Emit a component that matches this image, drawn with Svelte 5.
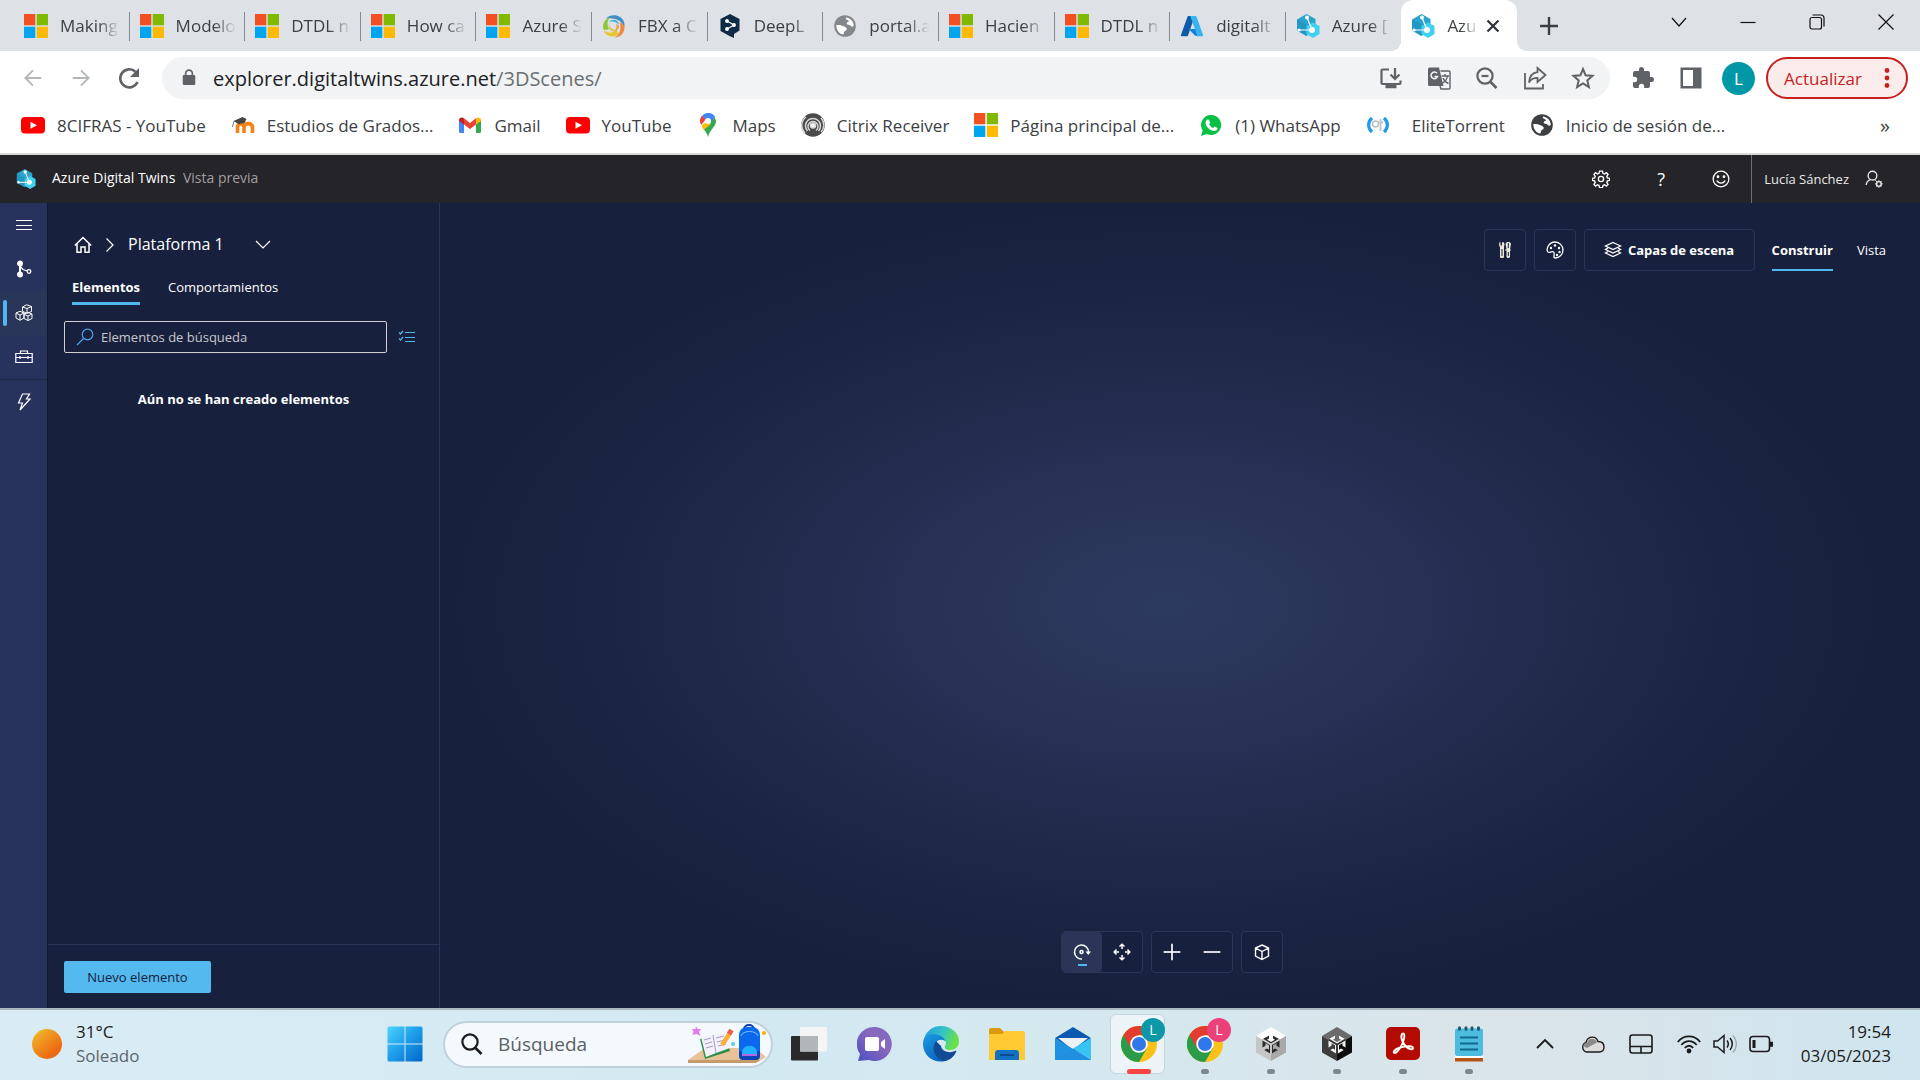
<script>
  const tabs = [
    { icon: 'ms', title: 'Making' },
    { icon: 'ms', title: 'Modelo' },
    { icon: 'ms', title: 'DTDL n' },
    { icon: 'ms', title: 'How ca' },
    { icon: 'ms', title: 'Azure S' },
    { icon: 'swirl', title: 'FBX a C' },
    { icon: 'deepl', title: 'DeepL' },
    { icon: 'globe', title: 'portal.a', faded: true },
    { icon: 'ms', title: 'Hacien' },
    { icon: 'ms', title: 'DTDL n' },
    { icon: 'azure', title: 'digitalt' },
    { icon: 'twins', title: 'Azure [' },
    { icon: 'twins', title: 'Azu', active: true }
  ];
  const bookmarks = [
    { icon: 'youtube', title: '8CIFRAS - YouTube' },
    { icon: 'moodle', title: 'Estudios de Grados...' },
    { icon: 'gmail', title: 'Gmail' },
    { icon: 'youtube', title: 'YouTube' },
    { icon: 'maps', title: 'Maps' },
    { icon: 'citrix', title: 'Citrix Receiver' },
    { icon: 'ms', title: 'Página principal de...' },
    { icon: 'whatsapp', title: '(1) WhatsApp' },
    { icon: 'elite', title: 'EliteTorrent', spaced: true },
    { icon: 'globe', title: 'Inicio de sesión de...' }
  ];
  const omniActions = [
    ['install', 'Instalar'],
    ['translate', 'Traducir'],
    ['zoomout', 'Zoom'],
    ['share', 'Compartir'],
    ['star', 'Añadir a marcadores']
  ];
  const rail = [
    ['menu', 'Menú'],
    ['graph', 'Grafo'],
    ['cubes', 'Escenas 3D'],
    ['toolbox', 'Herramientas'],
    ['bolt', 'Acciones']
  ];
  const apps = [
    { icon: 'taskview', name: 'Vista de tareas' },
    { icon: 'chat', name: 'Chat' },
    { icon: 'edge', name: 'Edge' },
    { icon: 'folder', name: 'Explorador' },
    { icon: 'mail', name: 'Correo' },
    { icon: 'chrome', name: 'Chrome', badge: 'teal', active: true },
    { icon: 'chrome', name: 'Chrome 2', badge: 'pink', running: true },
    { icon: 'unityhub', name: 'Unity Hub', running: true },
    { icon: 'unity', name: 'Unity', running: true },
    { icon: 'acrobat', name: 'Acrobat', running: true },
    { icon: 'notepad', name: 'Bloc de notas', running: true }
  ];
</script>

{#snippet icon(name)}
  {#if name === 'ms'}
    <svg viewBox="0 0 24 24"><path fill="#f25022" d="M0 0h11.3v11.3H0z" /><path fill="#7fba00" d="M12.7 0H24v11.3H12.7z" /><path fill="#00a4ef" d="M0 12.7h11.3V24H0z" /><path fill="#ffb900" d="M12.7 12.7H24V24H12.7z" /></svg>
  {:else if name === 'swirl'}
    <svg viewBox="0 0 24 24"><path fill="#3f8fc4" d="M4 4.500C9-.5 19 0 22 8c.7 2 .6 4 0 5.500C21 8 15 3 4 4.500z" /><path fill="#f08a3c" d="M22.500 13c0 6-4 10.500-10 10.500C17 21 20 16 17.500 8c2.500 1 4.500 3 5 5z" /><path fill="#e9c62c" d="M17 19.500C12 24.500 4 23 1.500 16c3 3 9 4 13.500-.5-.2 2 .5 3 2 4z" /><path fill="#8cc540" d="M1.500 15.500C0 10 2.500 5 8 3.500 5.500 6.500 4.500 10 7 15c-2 1-4 1-5.500.5z" /><path fill="#4fb2cf" d="M7 8c3-4 10-2.500 10 3-3-3.500-7-4-10-3z" /><path fill="#f3a14f" d="M17 11.500c0 3.500-2 6-5.500 6 2.500-1.500 3.500-4 2.500-7.500z" /><path fill="#c8d43a" d="M11.500 17.500C8 17 6 14 7 9.500c.5 3.500 2.500 6 6 6z" /></svg>
  {:else if name === 'deepl'}
    <svg viewBox="0 0 24 24"><path fill="#0f2b46" d="M12 0l9.500 5v11.500L16 20v4l-5-2.300L2.500 17V5z" /><g stroke="#fff" stroke-width="1.200" fill="#fff"><path fill="none" d="M9 7l7 4-7 4" /><circle cx="9" cy="7" r="1.300" /><circle cx="16" cy="11" r="1.300" /><circle cx="9" cy="15" r="1.300" /></g></svg>
  {:else if name === 'globe'}
    <svg viewBox="0 0 24 24"><circle cx="12" cy="12" r="10.800" fill="currentColor" /><path fill="#fff" d="M13 3.500c4.500.5 7.500 4 7.800 8-1 1.800-2.300 1.500-3 .5-.8-1.200-2-1-3.300-1.500-1.300-.6-1-2.200.5-2.500 1.300-.2 1.200-1.500 0-1.800-1.500-.4-2.800-1-2-2.700zM3.300 11c2.200-.3 5 .2 7.200 1.200 1.800.8 3.500 1.500 3.200 3-.2 1.500-2.200 1.300-2.700 3-.2 1-.3 2-1 2.300C6 19.700 3.300 16 3.300 11z" /></svg>
  {:else if name === 'azure'}
    <svg viewBox="0 0 24 24"><path fill="#0f59a8" d="M8.500 2h6.300L8 21.500a1 1 0 0 1-1 .7H2a1 1 0 0 1-1-1.400L7.500 2.700a1 1 0 0 1 1-.7z" /><path fill="#1b7fd6" d="M17.500 15H8.800l6 6.500 3 .7z" /><path fill="#36b4f0" d="M9.500 2h6a1 1 0 0 1 1 .7l6.500 18.100a1 1 0 0 1-1 1.400h-6a1 1 0 0 0 1-1.400L10.500 2.700a1 1 0 0 0-1-.7z" /></svg>
  {:else if name === 'twins'}
    <svg viewBox="0 0 24 24"><path fill="#2ba3cf" d="M10.500 0l9 5v11l-9 6-9.500-5.500V5.500z" /><path fill="#1b89b5" d="M1 16.500V5.500L10 10l.5 12z" opacity=".5" /><path fill="#3fd0f2" d="M17 8.500l6.500 3.500v8L17 24l-6.500-4v-8z" /><g stroke="#fff" stroke-width="1.200"><path d="M11 3.500L16 16M3 16h13" /></g><circle cx="11" cy="3.500" r="2" fill="#fff" /><circle cx="3" cy="16" r="1.600" fill="#fff" /><circle cx="16" cy="16" r="3" fill="#fff" /></svg>
  {:else if name === 'youtube'}
    <svg viewBox="0 0 24 24"><rect x="0" y="4" width="24" height="16.500" rx="4" fill="#f00" /><path fill="#fff" d="M9.500 8.700l6.500 3.500-6.500 3.600z" /></svg>
  {:else if name === 'moodle'}
    <svg viewBox="0 0 24 24" fill="none"><path stroke="#f98012" stroke-width="3.600" d="M6.500 20v-6c0-4.500 6.500-4.500 6.500 0v6m0-6c0-4.500 8.500-4.500 8.500 0v6" /><path fill="#444" d="M2.500 8l9-4 4 2-2 4-6 1z" /><path stroke="#777" d="M3 8l-1.500 6" /></svg>
  {:else if name === 'gmail'}
    <svg viewBox="0 0 24 24"><path fill="#4285f4" d="M1 7v11.500A1.500 1.500 0 0 0 2.500 20H6v-9z" /><path fill="#34a853" d="M23 7v11.500a1.500 1.500 0 0 1-1.500 1.500H18v-9z" /><path fill="#ea4335" d="M6 11.500V5.300l6 4.700 6-4.700v6.200L12 16z" /><path fill="#c5221f" d="M1 7c0-2.700 3-3.200 5-1.700v6.200L1 8z" /><path fill="#fbbc04" d="M23 7c0-2.700-3-3.200-5-1.700v6.200L23 8z" /></svg>
  {:else if name === 'maps'}
    <svg viewBox="0 0 24 24"><path fill="#34a853" d="M20 8c0 6-6 8-8 16-1-4-3-6-5-9L18.500 4z" /><path fill="#fbbc04" d="M5.500 12.500L12 8l3 3-7.500 6z" /><path fill="#ea4335" d="M4 8c0-2 .7-3.800 2-5.200L10 6l-4.800 6C4.400 10.800 4 9.500 4 8z" /><path fill="#4285f4" d="M6 2.800C9-.8 16.500-1.500 19 4l-6 6-4-4z" /><circle cx="12" cy="8" r="3" fill="#fff" /></svg>
  {:else if name === 'citrix'}
    <svg viewBox="0 0 24 24" fill="none"><circle cx="12" cy="12" r="11.800" fill="#4a4a4a" /><g stroke="#d8d8d8" stroke-width="1.500"><circle cx="12" cy="12.500" r="2.500" fill="#fff" /><path d="M6.500 18a7.500 7.500 0 1 1 11 0M4 20a10.500 10.500 0 0 1 1-16M9 17.500a5 5 0 1 1 6 0M20 5a10 10 0 0 1 0 14" /></g></svg>
  {:else if name === 'whatsapp'}
    <svg viewBox="0 0 24 24"><path fill="#08c044" d="M12.300 2a10 10 0 1 1-4.500 19L2 23l1.700-5.500A10 10 0 0 1 12.300 2z" /><path fill="#fff" d="M8.500 6.500l1.500.2 1.200 3-1 1.500c1 2 2 3 4 3.900l1.300-1.500 3 1.500c0 2-1.800 3-3.500 2.900-4.500-.6-8-4.500-8.500-8 0-1.500.8-3 2-3.500z" /></svg>
  {:else if name === 'elite'}
    <svg viewBox="0 0 24 24" fill="none"><g stroke="#1e9bf0" stroke-width="3.200"><path d="M6 5C1.500 9 1.500 15 6 19M18 5c4.500 4 4.500 10 0 14" /></g><circle cx="9.500" cy="11" r="3" stroke="#b9bec4" stroke-width="1.500" /><path stroke="#c4c8cc" stroke-width="2" d="M14.500 6v12M12 9.500h5" /></svg>
  {:else if name === 'back' || name === 'forward'}
    <svg viewBox="0 0 24 24" fill="none" stroke="currentColor" stroke-width="2.200">{#if name === 'back'}<path d="M22 12H3.500M12 2.800L2.800 12l9.200 9.200" />{:else}<path d="M2 12h18.500M12 2.800l9.200 9.200-9.200 9.200" />{/if}</svg>
  {:else if name === 'reload'}
    <svg viewBox="0 0 24 24" fill="none" stroke="currentColor" stroke-width="2.600"><path d="M20.500 16A9 9 0 1 1 18.500 5.800" /><path fill="currentColor" stroke="none" d="M22 2v9h-9z" /></svg>
  {:else if name === 'lock'}
    <svg viewBox="0 0 24 24"><rect x="4.500" y="8.500" width="15" height="12" rx="1.500" fill="currentColor" /><path d="M8 9.500V6.500a4 4 0 0 1 8 0v3" fill="none" stroke="currentColor" stroke-width="2" /></svg>
  {:else if name === 'install'}
    <svg viewBox="0 0 24 24" fill="none" stroke="currentColor" stroke-width="2.200"><path d="M10 3.500H3.500a1 1 0 0 0-1 1V17a1 1 0 0 0 1 1h17a1 1 0 0 0 1-1v-2.500M16 2v10.500M11.500 8.500l4.500 4.500 4.500-4.500" /><path stroke-width="3.500" d="M6.500 20.500h11" /></svg>
  {:else if name === 'translate'}
    <svg viewBox="0 0 24 24" fill="none"><path fill="#5f6368" d="M2.500 1.500H12L16.500 20H2.500A1.500 1.500 0 0 1 1 18.500V3a1.500 1.500 0 0 1 1.500-1.500z" /><path stroke="#f1f3f4" stroke-width="1.600" d="M10 7.300A3.300 3.300 0 1 0 10.500 10.500H7.500" /><path stroke="#5f6368" stroke-width="1.400" d="M13.500 5H22a1 1 0 0 1 1 1v16a1 1 0 0 1-1 1h-8l-1-3M14.500 10H22M18 8v2M20.500 10c-.5 3-3 6-5 7M16 12c1 2.500 3 4.500 5.500 5.500" /></svg>
  {:else if name === 'zoomout' || name === 'search'}
    <svg viewBox="0 0 24 24" fill="none" stroke="currentColor" stroke-width="2.200"><circle cx="10" cy="10" r="7.600" /><path stroke-width="2.600" d="M15.500 16l6 6" />{#if name === 'zoomout'}<path d="M6.500 10h7" />{/if}</svg>
  {:else if name === 'share'}
    <svg viewBox="0 0 24 24" fill="none" stroke="currentColor" stroke-width="1.800"><path d="M2 7v15.500h18V18" /><path d="M14.500 2l8 7-8 7v-4.200c-4.500 0-7 1.700-8.500 4.700.5-6 3.500-9.700 8.500-10.300z" /></svg>
  {:else if name === 'star'}
    <svg viewBox="0 0 24 24" fill="none" stroke="currentColor" stroke-width="2"><path d="M12 3l2.600 6.300 6.900.6-5.200 4.500 1.600 6.700L12 17.500l-5.900 3.600 1.600-6.700-5.200-4.500 6.900-.6z" /></svg>
  {:else if name === 'puzzle'}
    <svg viewBox="0 0 24 24"><path fill="currentColor" d="M20.500 11H19V7a2 2 0 0 0-2-2h-4V3.500a2.500 2.500 0 0 0-5 0V5H4a2 2 0 0 0-2 2v3.800h1.500a2.700 2.700 0 0 1 0 5.400H2V20a2 2 0 0 0 2 2h3.800v-1.500a2.700 2.700 0 0 1 5.400 0V22H17a2 2 0 0 0 2-2v-4h1.500a2.500 2.500 0 0 0 0-5z" /></svg>
  {:else if name === 'panel'}
    <svg viewBox="0 0 24 24"><path fill="currentColor" fill-rule="evenodd" d="M1.500 1.500h21v21h-21zM4 4v16h10V4z" /></svg>
  {:else if name === 'plus' || name === 'minus'}
    <svg viewBox="0 0 24 24" fill="none" stroke="currentColor" stroke-width="2"><path d="M2 12h20" />{#if name === 'plus'}<path d="M12 2v20" />{/if}</svg>
  {:else if name === 'gear'}
    <svg viewBox="0 0 24 24" fill="none" stroke="currentColor" stroke-width="1.800"><path d="M10 1.500h4l.6 3 2 .8 2.600-1.700 2.200 2.200-1.700 2.600.8 2 3 .6v3l-3 .6-.8 2 1.700 2.600-2.200 2.200-2.600-1.700-2 .8-.6 3h-4l-.6-3-2-.8-2.600 1.700-2.200-2.200 1.700-2.600-.8-2-3-.6v-3l3-.6.8-2-1.700-2.600 2.200-2.200 2.600 1.700 2-.8z" /><circle cx="12" cy="12" r="3.500" /></svg>
  {:else if name === 'smile'}
    <svg viewBox="0 0 24 24" fill="none" stroke="currentColor" stroke-width="1.700"><circle cx="12" cy="12" r="10.500" /><path d="M6.500 14c2 4.500 9 4.500 11 0" /><circle cx="8" cy="9" r="1" fill="currentColor" /><circle cx="16" cy="9" r="1" fill="currentColor" /></svg>
  {:else if name === 'user'}
    <svg viewBox="0 0 24 24" fill="none" stroke="currentColor" stroke-width="1.800"><circle cx="10" cy="7.500" r="5.800" /><path d="M1.500 20c.5-4 3-6.500 6.500-7.500M13 13l1.500 1" /><circle cx="18.500" cy="18.500" r="3" /><path stroke-width="1.500" d="M18.500 13.500v2M18.500 21.500v2M13.500 18.500h2M21.500 18.500h2M15 15l1.400 1.400M20.600 20.600L22 22M22 15l-1.400 1.400M16.400 20.600L15 22" /></svg>
  {:else if name === 'menu'}
    <svg viewBox="0 0 18 18" stroke="currentColor"><path d="M1 4.500h16M1 9.500h16M1 13.500h16" /></svg>
  {:else if name === 'graph'}
    <svg viewBox="0 0 18 18" fill="none" stroke="currentColor" stroke-width="1.300"><circle cx="5" cy="3.500" r="2.300" fill="currentColor" /><circle cx="5" cy="14.500" r="2.300" fill="currentColor" /><circle cx="14" cy="11.500" r="1.800" /><path stroke-width="2" d="M5 4v10" /><path d="M5 6l3 3.500 4 1.500" /></svg>
  {:else if name === 'cubes'}
    <svg viewBox="0 0 18 18" fill="none" stroke="currentColor"><path d="M11.500.8l5 1.700v5l-4.500 1.800-4.500-2V3zM7.500 3l4.500 1.500 4.500-2M12 4.500v4" /><path d="M5 7.300l4 1.700v5l-4 2.300-4-2.300V9zM1 9l4 2 4-2M5 11v5" /><path d="M13 8.500l4 1.500v4.500l-4 2-4-2V10zM9.500 10.500l3.500 1.500 4-2M13 12v4.500" /></svg>
  {:else if name === 'toolbox'}
    <svg viewBox="0 0 18 18" fill="none" stroke="currentColor" stroke-width="1.200"><path d="M.8 5.500h16.400v9H.8zM5.500 5V3h7v2M.8 9.500h16.400M5 8v3M13 8v3" /></svg>
  {:else if name === 'bolt'}
    <svg viewBox="0 0 18 18" fill="none" stroke="currentColor" stroke-width="1.200"><path d="M7.500 1h7L11.500 6H15L5 17l2.500-7H3.500z" /></svg>
  {:else if name === 'home'}
    <svg viewBox="0 0 18 18" fill="none" stroke="currentColor" stroke-width="1.500"><path d="M.8 10.500L9 2.500l8.200 8M3 9v8.200h4V12h4v5.200h4V9" /></svg>
  {:else if name === 'chevright'}
    <svg viewBox="0 0 18 18" fill="none" stroke="currentColor" stroke-width="1.200"><path d="M6.500 3.500L13 10l-6.500 6.500" /></svg>
  {:else if name === 'chevdown'}
    <svg viewBox="0 0 18 18" fill="none" stroke="currentColor" stroke-width="1.200"><path d="M2 6l7 7 7-7" /></svg>
  {:else if name === 'find'}
    <svg viewBox="0 0 18 18" fill="none" stroke="currentColor" stroke-width="1.200"><circle cx="11.500" cy="6.500" r="5.300" /><path d="M7.500 10.500L1 17" /></svg>
  {:else if name === 'checklist'}
    <svg viewBox="0 0 18 18" fill="none" stroke="currentColor" stroke-width="1.200"><path d="M7 4.500h10M7 9.500h10M7 13.500h10M1 4.500l1.500 1.500L5 3M1 10.500l1.500 1.500L5 9" /></svg>
  {:else if name === 'tools'}
    <svg viewBox="0 0 18 18"><path fill="#e9e6dc" d="M3.500 1l1 .5v3h1.500v-3L7.500 1l1 2-.5 3.500v10L6.500 17H5l-1-.5v-10L3 4z" /><path fill="#e9e6dc" d="M9.500 2.500L11 1h2.500L15 2.500 14 8.500h1v1h-1V16l-1 1h-1.500l-1-1V9.500H9v-1h1.500z" /><path stroke="#17203c" d="M6 8v7M12.300 2v5M12.300 11v4" /></svg>
  {:else if name === 'palette'}
    <svg viewBox="0 0 18 18" fill="none" stroke="currentColor" stroke-width="1.300"><path d="M9 1a8 8 0 1 1 0 16c-2.500 0 .5-4.500-1.500-6S3 13 1.500 10.500C0 7 3.500 1 9 1z" /><g fill="currentColor" stroke="none"><circle cx="5" cy="7" r="1.200" /><circle cx="9" cy="4.500" r="1.200" /><circle cx="13" cy="7" r="1.200" /><circle cx="13.500" cy="11" r="1.200" /><circle cx="11" cy="14" r="1.200" /></g></svg>
  {:else if name === 'layers'}
    <svg viewBox="0 0 18 18" fill="none" stroke="currentColor" stroke-width="1.300"><path d="M9 1.500l7.500 3.500L9 8.500 1.500 5zM4 7L1.500 8.500 9 12l7.500-3.500L14 7M4 10.500L1.500 12 9 15.500l7.500-3.500-2.500-1.500" /></svg>
  {:else if name === 'orbit'}
    <svg viewBox="0 0 18 18" fill="none" stroke="currentColor" stroke-width="1.500"><path d="M9 16A7 7 0 1 1 15.500 9" /><circle cx="8.500" cy="9" r="1.500" /><path fill="currentColor" stroke="none" d="M12.500 8.500H18l-2.700 3.500z" /></svg>
  {:else if name === 'pan'}
    <svg viewBox="0 0 18 18" fill="none" stroke="currentColor" stroke-width="1.500"><path d="M9 1.500V6M9 12v4.500M1.500 9H6M12 9h4.500M6.500 3.500L9 1.200l2.500 2.300M6.500 14.500L9 16.800l2.500-2.300M3.500 6.500L1.200 9l2.300 2.500M14.500 6.500L16.800 9l-2.300 2.500" /></svg>
  {:else if name === 'cube'}
    <svg viewBox="0 0 18 18" fill="none" stroke="currentColor" stroke-width="1.400"><path d="M9 2l6.500 3v8L9 16.500 2.500 13V5zM2.500 5L9 8.500 15.500 5M9 8.500v8" /></svg>
  {:else if name === 'windows'}
    <svg viewBox="0 0 36 36"><defs><linearGradient id="win" x1="0" y1="0" x2="1" y2="1"><stop stop-color="#4cd4ff" /><stop offset=".5" stop-color="#1d9be9" /><stop offset="1" stop-color="#0067c8" /></linearGradient></defs><path fill="url(#win)" d="M2 .5h15.500v17H.5V2A1.500 1.500 0 0 1 2 .5zM18.500.5H34A1.500 1.500 0 0 1 35.500 2v15.500h-17zM.5 18.500h17v17H2A1.500 1.500 0 0 1 .5 34zM18.500 18.500h17V34a1.500 1.500 0 0 1-1.500 1.500H18.500z" /></svg>
  {:else if name === 'taskview'}
    <svg viewBox="0 0 36 36"><rect y="10" width="27" height="24.500" rx="1" fill="#2a2a2a" /><rect x="9" y="1" width="27" height="24.500" rx="1" fill="#f5f5f5" /><path fill="#b3b6b8" d="M9 10h18v15.500H9z" /></svg>
  {:else if name === 'chat'}
    <svg viewBox="0 0 36 36"><defs><linearGradient id="cht" x1="1" y1="0" x2="0" y2="1"><stop stop-color="#7a6cc4" /><stop offset=".4" stop-color="#8a68ba" /><stop offset="1" stop-color="#4b50c4" /></linearGradient></defs><path fill="url(#cht)" d="M18 1a17 17 0 1 1-6 33L1 35l2-7A17 17 0 0 1 18 1z" /><rect x="8" y="11" width="14" height="14" rx="2" fill="#fff" /><path fill="#fff" d="M24 16l4-3v10l-4-3z" /></svg>
  {:else if name === 'edge'}
    <svg viewBox="0 0 36 36"><defs><linearGradient id="ed1" x1="0" y1="0" x2="1" y2=".3"><stop offset=".2" stop-color="#2aa5dc" /><stop offset=".6" stop-color="#35c6c0" /><stop offset="1" stop-color="#6be048" /></linearGradient><linearGradient id="ed2" x1="0" y1="0" x2=".6" y2="1"><stop stop-color="#1b9de2" /><stop offset="1" stop-color="#0a63c0" /></linearGradient></defs><path fill="url(#ed1)" d="M.5 15C2 6 9 0 18 0c10 0 18 7 18 15 0 6-4 9-9 9-4 0-6-2-5-4 2-2 1-7-4-7z" /><path fill="url(#ed2)" d="M0 18C0 11 5 8 10 8c7 0 12 4 12 7-5-3-10 0-10 6s5 12 13 13c-12 5-25-3-25-16z" /><path fill="#114a94" d="M13 15c-5 8-2 16 7 20 6 0 11-4 13-9 1-1-.3-1.500-1-1-5 2.500-13 1-14-5z" /></svg>
  {:else if name === 'folder'}
    <svg viewBox="0 0 36 36"><path fill="#dd9a08" d="M0 4a2 2 0 0 1 2-2h9l4 4v4H0z" /><path fill="#ffc933" d="M0 8h13l3-3h18a2 2 0 0 1 2 2v27H0z" /><path fill="#1271c4" d="M6 34V27a3 3 0 0 1 3-3h18a3 3 0 0 1 3 3v7z" /><path stroke="#0a4c92" stroke-width="2" d="M11 29h14" /></svg>
  {:else if name === 'mail'}
    <svg viewBox="0 0 36 36"><path fill="#0b5ab0" d="M0 12L18 1l18 11-18 13z" /><path fill="#eef1f4" d="M3 12h30L18 24z" /><path fill="#1f93e0" d="M0 12l18 11 18 11H0z" /><path fill="#37c4f2" d="M36 12L18 22.500 36 34z" /><path fill="#218ee0" d="M0 34l18-11.500L36 34z" /></svg>
  {:else if name === 'chrome'}
    <svg viewBox="0 0 36 36"><circle cx="18" cy="18" r="18" fill="#fbc116" /><path fill="#2a9b48" d="M2.400 9A18 18 0 0 0 18 36l7.800-13.500-7.800-4.500z" /><path fill="#e33b2e" d="M2.400 9A18 18 0 0 1 33.600 9H18l-7.800 13.500z" /><circle cx="18" cy="18" r="8.800" fill="#fff" /><circle cx="18" cy="18" r="7" fill="#2f77ea" /></svg>
  {:else if name === 'unityhub' || name === 'unity'}
    {@const hub = name === 'unityhub'}
    <svg viewBox="0 0 36 36"><path fill={hub ? '#fdfdfd' : '#6b6b6b'} d="M18 1l15 9-15 8.500L3 10z" /><path fill={hub ? '#c6c6c6' : '#3d3d3d'} d="M3 10l15 8.500V35L3 26.500z" /><path fill={hub ? '#a9a9a9' : '#0d0d0d'} d="M33 10l-15 8.500V35l15-8.500z" />
      <path fill={hub ? '#2b2b2b' : '#f2f2f2'} d="M18 8.500l8.500 4.800v9.800L18 28l-8.500-4.900v-9.800z" />
      <path fill="none" stroke={hub ? '#d8d8d8' : '#2c2c2c'} stroke-width="1.800" d="M18 28v-9.500l-8.500-5M18 18.500l8.500-5" />
      <path fill={hub ? '#fdfdfd' : '#6b6b6b'} d="M18 7.500l2 1.200v3.800l2 1.200-4 2.300-4-2.300 2-1.200V8.700z" />
      <path fill={hub ? '#c6c6c6' : '#3d3d3d'} d="M9 24.300v-2.500l3.500-2v-2.500l3.500 2v4.500l-2-1.200-3.500 2z" /><path fill={hub ? '#a9a9a9' : '#0d0d0d'} d="M27 24.300v-2.500l-3.500-2v-2.500l-3.500 2v4.500l2-1.200 3.500 2z" /></svg>
  {:else if name === 'acrobat'}
    <svg viewBox="0 0 36 36"><rect x="1" y="1" width="34" height="33" rx="5" fill="#b30b00" /><path fill="none" stroke="#fff" stroke-width="1.900" d="M17 8c3-2 3 3 1 8-2 5-5 10-8 11-3 0-1-4 7-6 6-1.500 11-1 11 1s-4 1.500-7-1.500c-3-3-6-9-4-12.500z" /></svg>
  {:else if name === 'notepad'}
    <svg viewBox="0 0 36 36"><path fill="#b5551a" d="M4 31h28v4.500H4z" /><path fill="#fff" d="M4 29h28v3H4z" /><rect x="4" y="2.500" width="28" height="27.500" rx="2" fill="#4dbbdd" /><path stroke="#0e6a8c" stroke-width="2" d="M9 11.500h18M9 17.500h18M9 23.500h18" /><path stroke="#1f5a75" stroke-width="3" stroke-linecap="round" d="M8.500 1.800v1.500M15 1.800v1.500M21 1.800v1.500M27.500 1.800v1.500" /></svg>
  {/if}
{/snippet}

<div class="screen">
  <header class="chrome">
    <div class="strip">
      <nav class="tabs" aria-label="Pestañas">
        {#each tabs as tab}
          <div class="tab" class:active={tab.active}>
            <button class="tab-main" class:faded={tab.faded}>
              <span class="ico i24">{@render icon(tab.icon)}</span>
              <span class="tab-title">{tab.title}</span>
            </button>
            {#if tab.active}
              <button class="tab-close" aria-label="Cerrar pestaña">
                <svg viewBox="0 0 14 14" stroke="currentColor" stroke-width="2.200"><path d="M1.500 1.500l11 11M12.500 1.500l-11 11" /></svg>
              </button>
            {/if}
          </div>
        {/each}
      </nav>
      <div class="window">
        <button class="newtab" aria-label="Nueva pestaña"><svg viewBox="0 0 18 18" stroke="currentColor" stroke-width="2.400"><path d="M9 0v18M0 9h18" /></svg></button>
        <button aria-label="Buscar pestañas"><svg viewBox="0 0 16 16" fill="none" stroke="currentColor" stroke-width="1.200"><path d="M1 4l7 8 7-8" /></svg></button>
        <button aria-label="Minimizar"><svg viewBox="0 0 16 16" fill="none" stroke="currentColor" stroke-width="1.200"><path d="M.5 8.500h15" /></svg></button>
        <button aria-label="Restaurar"><svg viewBox="0 0 16 16" fill="none" stroke="currentColor" stroke-width="1.200"><rect x="1" y="3.500" width="11.500" height="11.500" rx="2" /><path d="M3.500 1h8.500a3 3 0 0 1 3 3v8.500" /></svg></button>
        <button aria-label="Cerrar"><svg viewBox="0 0 16 16" fill="none" stroke="currentColor" stroke-width="1.200"><path d="M.5.5l15 15M15.500.5l-15 15" /></svg></button>
      </div>
    </div>

    <div class="toolbar">
      <div class="history">
        <button class="dim" aria-label="Atrás"><span class="ico i20">{@render icon('back')}</span></button>
        <button class="dim" aria-label="Adelante"><span class="ico i20">{@render icon('forward')}</span></button>
        <button aria-label="Recargar"><span class="ico i24">{@render icon('reload')}</span></button>
      </div>
      <div class="omnibox">
        <span class="ico i20">{@render icon('lock')}</span>
        <a class="url" href="#url">explorer.digitaltwins.azure.net<span>/3DScenes/</span></a>
        {#each omniActions as [name, label]}
          <button aria-label={label}><span class="ico i24">{@render icon(name)}</span></button>
        {/each}
      </div>
      <div class="extras">
        <button aria-label="Extensiones"><span class="ico i24">{@render icon('puzzle')}</span></button>
        <button aria-label="Panel lateral"><span class="ico i24">{@render icon('panel')}</span></button>
        <button class="avatar">L</button>
        <button class="update">Actualizar <svg viewBox="0 0 6 20" fill="currentColor"><circle cx="3" cy="2.500" r="2.400" /><circle cx="3" cy="10" r="2.400" /><circle cx="3" cy="17.500" r="2.400" /></svg></button>
      </div>
    </div>

    <nav class="bookmarks" aria-label="Marcadores">
      {#each bookmarks as mark}
        <a class:spaced={mark.spaced} href="#marcador"><span class="ico i24">{@render icon(mark.icon)}</span>{mark.title}</a>
      {/each}
      <button class="more">»</button>
    </nav>
  </header>

  <div class="app">
    <header class="appbar">
      <span class="ico i20">{@render icon('twins')}</span>
      <h1>Azure Digital Twins <small>Vista previa</small></h1>
      <div class="appactions">
        <button aria-label="Configuración"><span class="ico i18">{@render icon('gear')}</span></button>
        <button class="help">?</button>
        <button aria-label="Comentarios"><span class="ico i18">{@render icon('smile')}</span></button>
      </div>
      <button class="account">Lucía Sánchez <span class="ico i18">{@render icon('user')}</span></button>
    </header>

    <div class="body">
      <nav class="rail" aria-label="Secciones">
        {#each rail as [name, label]}
          <button class:selected={name === 'cubes'} class:ruled={name === 'bolt'} aria-label={label}><span class="ico i18">{@render icon(name)}</span></button>
        {/each}
      </nav>

      <aside class="panel">
        <div class="crumbs">
          <button aria-label="Inicio"><span class="ico i18">{@render icon('home')}</span></button>
          <span class="ico i18">{@render icon('chevright')}</span>
          <button class="scene-name">Plataforma 1 <span class="ico i18">{@render icon('chevdown')}</span></button>
        </div>
        <div class="pivot">
          <button class="on">Elementos</button>
          <button>Comportamientos</button>
        </div>
        <div class="searchrow">
          <label class="searchbox"><span class="ico i18">{@render icon('find')}</span><input type="text" aria-label="Elementos de búsqueda" placeholder="Elementos de búsqueda" /></label>
          <button aria-label="Selección múltiple"><span class="ico i18">{@render icon('checklist')}</span></button>
        </div>
        <p class="empty">Aún no se han creado elementos</p>
        <footer><button class="primary">Nuevo elemento</button></footer>
      </aside>

      <main class="scene">
        <div class="scenebar">
          <button class="box" aria-label="Herramientas"><span class="ico i18">{@render icon('tools')}</span></button>
          <button class="box" aria-label="Tema"><span class="ico i18">{@render icon('palette')}</span></button>
          <button class="box wide"><span class="ico i18">{@render icon('layers')}</span>Capas de escena</button>
          <div class="modes">
            <button class="on">Construir</button>
            <button>Vista</button>
          </div>
        </div>
        <div class="camera">
          <div class="group">
            <button class="current" aria-label="Orbitar"><span class="ico i18">{@render icon('orbit')}</span></button>
            <button aria-label="Desplazar"><span class="ico i18">{@render icon('pan')}</span></button>
          </div>
          <div class="group">
            <button aria-label="Acercar"><span class="ico i20">{@render icon('plus')}</span></button>
            <button aria-label="Alejar"><span class="ico i20">{@render icon('minus')}</span></button>
          </div>
          <div class="group">
            <button aria-label="Restablecer cámara"><span class="ico i18">{@render icon('cube')}</span></button>
          </div>
        </div>
      </main>
    </div>
  </div>

  <footer class="taskbar">
    <button class="weather">
      <span class="sun"></span>
      <span class="lines"><span>31°C</span><span class="soft">Soleado</span></span>
    </button>
    <div class="dock">
      <button class="start" aria-label="Inicio"><span class="ico i36">{@render icon('windows')}</span></button>
      <label class="wsearch">
        <span class="ico i24">{@render icon('search')}</span>
        <input type="text" aria-label="Búsqueda" placeholder="Búsqueda" />
        <svg class="school" viewBox="0 0 78 40">
          <path fill="#e8c298" d="M0 36l17-12h50l11 9-8 5H0z" /><path fill="#c59a6c" d="M0 36h72l-4 3H0z" />
          <path fill="#2f8f4a" d="M12 15l25-6 5 18-25 8z" /><path fill="#f4f1fb" d="M13 13l12-2 3 18-10 4zM25 11l13-3 4 16-14 5z" />
          <path stroke="#a39cc0" fill="none" d="M25 11l3 18M16 16l7-2M17 20l7-2M18 24l7-2M28 14l8-2M29 18l8-2M30 22l8-2" />
          <path stroke="#fbb034" stroke-width="4.500" d="M34 21l8-12" /><path stroke="#ef5b4c" stroke-width="5" d="M41 10l2.500-4" />
          <path fill="#e07bf0" d="M8 2l1.500 3 3.500 0-2 3 1.500 4-4-2-4 1 1-3.500L4 5l3.500 0z" />
          <path fill="none" stroke="#0a3fa8" stroke-width="2" d="M56 5a5 4 0 0 1 10 0" /><rect x="51" y="3" width="21" height="33" rx="8" fill="#0a68ee" /><path fill="#0a45b8" d="M51 27h21v5a4 4 0 0 1-4 4H55a4 4 0 0 1-4-4z" /><path fill="#21b0ff" d="M54 27a8 8 0 0 1 15 0v3H54z" /><path stroke="#c86bea" stroke-width="1.800" d="M54 31h15" /><path stroke="#6ec9ff" fill="none" d="M53 12c1-6 16-6 17 0" />
          <circle cx="45" cy="20" r="2" fill="#58cfe0" /><circle cx="76" cy="9" r="2" fill="#ffb000" />
        </svg>
      </label>
      {#each apps as app}
        <button class="app-button" class:active={app.active} class:running={app.running} aria-label={app.name}>
          <span class="ico i36">{@render icon(app.icon)}</span>
          {#if app.badge}<span class="badge {app.badge}">L</span>{/if}
        </button>
      {/each}
    </div>
    <div class="tray">
      <button aria-label="Mostrar iconos ocultos"><svg class="t24" viewBox="0 0 24 24" fill="none" stroke="currentColor" stroke-width="1.800"><path d="M4 16l8-8 8 8" /></svg></button>
      <button aria-label="OneDrive"><svg class="t24" viewBox="0 0 24 24" stroke="currentColor" stroke-width="1.400"><path fill="#dcdcdc" d="M5.500 20a5 5 0 0 1-.5-9.500C6.500 4 15 3 17 9.500c4 0 6 2.500 6 5.500 0 3-2 5-5 5z" /><path stroke="none" fill="#8a8a8a" d="M2 14c1-3 3-3.500 4-3 2-6 9-5 10-.5L6 16z" /></svg></button>
      <button aria-label="Panel táctil"><svg class="t24" viewBox="0 0 24 24" fill="none" stroke="currentColor" stroke-width="1.600"><rect x="1" y="3" width="22" height="18" rx="2.500" /><path d="M1 14.500h22M12 14.500V21" /></svg></button>
      <button class="status" aria-label="Red, volumen y batería">
        <svg class="t24" viewBox="0 0 24 24" fill="none" stroke="currentColor" stroke-width="1.800"><path d="M.8 10c6-7.500 16.400-7.500 22.400 0M4.300 13c4.500-5.200 11-5.200 15.400 0M7.800 16c2.500-3 6-3 8.400 0" /><circle cx="12" cy="19" r="1.500" fill="currentColor" /></svg>
        <svg class="t24" viewBox="0 0 24 24" fill="none" stroke="currentColor" stroke-width="1.500"><path d="M1 9h3.500L11 3.500v17L4.500 15H1zM14 8.500c1.500 2 1.500 5 0 7M17 6c3 3.500 3 8.500 0 12" /><path stroke="#9fb0b8" d="M20 3.500c4.500 5 4.500 12 0 17" /></svg>
        <svg class="t24" viewBox="0 0 24 24" fill="none" stroke="currentColor" stroke-width="1.600"><rect x="1" y="4.500" width="19.500" height="15" rx="3" /><path stroke-width="3" d="M5 8v8" /><path fill="currentColor" d="M21 10.500h2.500v3.500H21z" /></svg>
      </button>
      <button class="lines clock"><span>19:54</span><span>03/05/2023</span></button>
    </div>
  </footer>
</div>

<style>
  :global(body) { margin: 0; }
  .screen { display: flex; flex-direction: column; height: 100vh; overflow: hidden; font-family: 'Open Sans', 'Noto Sans', sans-serif; font-size: 13px; color: #fff; }
  button { display: flex; align-items: center; justify-content: center; padding: 0; border: 0; background: none; color: inherit; font: inherit; white-space: nowrap; }
  a { color: inherit; text-decoration: none; }
  svg { display: block; flex: none; }
  input { min-width: 0; flex: 1; border: 0; padding: 0; background: none; outline: 0; font: inherit; color: inherit; }
  .ico { flex: none; }
  .ico :global(svg) { width: 100%; height: 100%; }
  .i18 { width: 18px; height: 18px; }
  .i20 { width: 20px; height: 20px; }
  .i24 { width: 24px; height: 24px; }
  .i36 { width: 36px; height: 36px; }

  .chrome { flex: none; color: #3c4043; background: #fff; border-bottom: 2px solid #dadada; }
  .strip { display: flex; height: 51px; padding-left: 14px; background: #dee1e6; }
  .tabs { flex: 1; display: grid; grid-auto-flow: column; grid-auto-columns: minmax(0, 1fr); min-width: 0; }
  .tab { position: relative; display: flex; align-items: center; min-width: 0; padding: 0 2px 0 10px; }
  .tab:not(.active)::after { content: ''; position: absolute; right: 0; top: 12px; width: 1px; height: 29px; background: #868a8f; }
  .tab:nth-last-child(2)::after { display: none; }
  .tab-main { flex: 1; min-width: 0; gap: 12px; justify-content: flex-start; font-size: 17px; }
  .tab-main.faded { color: #85888b; }
  .tab-main.faded .tab-title { color: #3c4043; }
  .tab-title { flex: 1; min-width: 0; text-align: left; mask-image: linear-gradient(90deg, #000 38px, transparent 60px); }
  .tab.active { padding-right: 12px; background: #fff; border-radius: 12px 12px 0 0; }
  .active .tab-title { mask-image: linear-gradient(90deg, #000 14px, transparent 32px); }
  .tab.active::before, .tab.active::after { content: ''; position: absolute; bottom: 0; width: 10px; height: 10px; }
  .tab.active::before { left: -10px; background: radial-gradient(circle at 0 0, transparent 10px, #fff 10px); }
  .tab.active::after { right: -10px; background: radial-gradient(circle at 100% 0, transparent 10px, #fff 10px); }
  .tab-close { width: 24px; color: #2f3337; }
  .tab-close svg { width: 14px; height: 14px; }
  .window { flex: none; display: flex; width: 403px; height: 44px; color: #111; justify-content: flex-end; }
  .window button { width: 69px; }
  .window svg { width: 16px; height: 16px; }
  .window .newtab { width: 64px; height: 51px; margin-right: auto; color: #3c4043; }
  .window .newtab svg { width: 18px; height: 18px; }

  .toolbar { display: flex; align-items: center; height: 54px; padding-right: 12px; color: #5f6368; }
  .history { display: flex; width: 162px; padding-left: 9px; box-sizing: border-box; }
  .history button { width: 48px; }
  .dim { color: #b4b7ba; }
  .omnibox { flex: 1; display: flex; align-items: center; height: 42px; padding: 0 3px 0 17px; border-radius: 21px; background: #f1f3f4; }
  .omnibox button { width: 48px; }
  .url { flex: 1; padding-left: 14px; font-size: 20px; color: #202124; }
  .url span { color: #6b6f73; }
  .extras { display: flex; align-items: center; padding-left: 9px; }
  .extras button { width: 48px; }
  .extras .avatar { width: 33px; height: 33px; margin: 0 11px 0 7px; border-radius: 50%; background: #0097a7; color: #fff; font-size: 17px; }
  .extras .update { width: 142px; height: 42px; box-sizing: border-box; border: 2px solid #c5221f; border-radius: 21px; gap: 22px; background: #faecea; color: #c5221f; font-size: 17px; }
  .update svg { width: 6px; height: 20px; }

  .bookmarks { display: flex; align-items: center; height: 48px; padding: 0 30px 8px 21px; gap: 25px; box-sizing: border-box; font-size: 17px; white-space: nowrap; }
  .bookmarks a { display: flex; align-items: center; gap: 12px; }
  .bookmarks .spaced { gap: 22px; }
  .bookmarks .more { margin-left: auto; font-size: 20px; }

  .app { flex: 1; display: flex; flex-direction: column; min-height: 0; background: #17203c; }
  .appbar { flex: none; display: flex; align-items: center; height: 48px; padding-left: 16px; background: #252429; }
  h1 { flex: 1; margin: 0; padding: 0 0 3px 16px; font-size: 14px; font-weight: 400; }
  h1 small { padding-left: 4px; font-size: 14px; color: #a19f9d; }
  .appactions { display: flex; }
  .appactions button { width: 60px; }
  .help { font-size: 18px; }
  .account { align-self: stretch; gap: 16px; padding: 0 37px 0 12px; border-left: 1px solid #6e6d70; color: #e8e8e8; }
  .body { flex: 1; display: flex; min-height: 0; }
  .rail { width: 47px; flex: none; background: #27325d; border-right: 1px solid #10172e; }
  .rail button { position: relative; width: 100%; height: 44px; }
  .rail .selected { background: #29365a; }
  .rail .selected::before { content: ''; position: absolute; left: 3px; top: 9px; width: 4px; height: 26px; border-radius: 2px; background: #50b8ee; }
  .rail .ruled { border-top: 1px solid #1d2748; }

  .panel { flex: none; display: flex; flex-direction: column; width: 391px; border-right: 1px solid #2a3558; }
  .crumbs { display: flex; align-items: center; gap: 8px; height: 34px; padding: 24px 26px 0; }
  .crumbs .scene-name { gap: 30px; padding-left: 2px; font-size: 16px; }
  .pivot { display: flex; gap: 28px; padding: 10px 24px 0; }
  .pivot button { height: 34px; border-bottom: 3px solid transparent; font-size: 13px; }
  .pivot .on, .modes .on { font-weight: 700; border-bottom-color: #50b8ee; }
  .searchrow { display: flex; align-items: center; gap: 11px; padding: 16px 23px 0 16px; color: #50b8ee; }
  .searchbox { flex: 1; display: flex; align-items: center; gap: 7px; height: 30px; padding: 0 12px 0 11px; border: 1px solid #d0d0d2; border-radius: 2px; color: #4aa3e8; }
  .searchbox input { color: #fff; }
  .searchbox input::placeholder { color: #c8c8cc; opacity: 1; }
  .empty { flex: 1; margin: 37px 0 0; text-align: center; font-weight: 700; font-size: 13px; }
  .panel footer { border-top: 1px solid #2a3558; padding: 16px; height: 31px; }
  .primary { width: 147px; height: 32px; border-radius: 2px; background: #53b9ee; color: #17203c; }

  .scene { flex: 1; display: flex; flex-direction: column; justify-content: space-between; align-items: center; min-width: 0; padding: 26px 22px 35px; background: radial-gradient(ellipse closest-side at 49% 50%, #2d3a60 0%, #283156 34%, #1d2746 68%, #17203c 100%); }
  .scenebar { align-self: flex-end; display: flex; gap: 8px; }
  .box { box-sizing: border-box; min-width: 42px; height: 42px; border: 1px solid #2a3558; border-radius: 4px; background: #17203c; }
  .wide { gap: 6px; width: 171px; font-weight: 700; }
  .modes { display: flex; gap: 12px; padding-left: 9px; }
  .modes button { box-sizing: border-box; height: 42px; border-bottom: 2px solid transparent; padding-top: 2px; }
  .modes button:last-child { padding: 2px 12px 0; }
  .camera { display: flex; gap: 8px; margin-right: 16px; }
  .group { display: flex; border: 1px solid #2a3558; border-radius: 4px; background: #17203c; }
  .group button { position: relative; width: 40px; height: 40px; }
  .group button.current { border-radius: 4px; background: #2a3558; }
  .current::after { content: ''; position: absolute; left: 16px; bottom: 6px; width: 9px; height: 2px; background: #50b8ee; }

  .taskbar { flex: none; display: flex; box-sizing: border-box; height: 72px; padding-bottom: 2px; border-top: 2px solid #a9b8be; background: linear-gradient(90deg, #d9ecf6 0%, #d3e9f2 40%, #d5e8ee 60%, #dae4e8 79%, #cfe5ef 100%); color: #1b1b1b; font-size: 17px; }
  .lines { display: flex; flex-direction: column; align-items: flex-start; line-height: 24px; }
  .soft { color: #5d666b; }
  .weather { gap: 14px; width: 370px; justify-content: flex-start; padding-left: 32px; box-sizing: border-box; }
  .sun { width: 30px; height: 30px; border-radius: 50%; background: linear-gradient(140deg, #f2c230, #ee6a10 75%); }
  .dock { display: flex; align-items: center; margin-right: auto; }
  .start { width: 69px; }
  .wsearch { display: flex; align-items: center; width: 330px; height: 47px; margin: 0 3px 0 4px; padding: 0 5px 0 15px; box-sizing: border-box; gap: 14px; border: 2px solid #bdd2dc; border-radius: 24px; background: #f3f9fd; font-size: 19px; }
  .wsearch input::placeholder { color: #5c6165; opacity: 1; }
  .school { width: 78px; height: 40px; }
  .app-button { position: relative; width: 66px; height: 60px; }
  .app-button.active::before { content: ''; position: absolute; left: 4px; top: 0; width: 53px; height: 58px; border: 1px solid #c3d6de; border-radius: 6px; background: #ecf4f8; }
  .app-button .ico { position: relative; }
  .badge { position: absolute; left: 35px; top: 4px; width: 24px; height: 24px; border-radius: 50%; line-height: 24px; font-size: 14px; color: #fff; }
  .teal { background: #0e97a7; }
  .pink { background: #ec407a; }
  .app-button.active::after, .running::after { content: ''; position: absolute; left: 29px; bottom: 0; width: 8px; height: 5px; border-radius: 3px; background: #7d878c; }
  .app-button.active::after { left: 21px; width: 24px; background: #fa4343; }
  .tray { display: flex; align-items: center; padding-right: 29px; }
  .tray > button { width: 48px; }
  .tray .status { width: auto; gap: 12px; padding: 0 28px 0 12px; }
  .t24 { width: 24px; height: 24px; }
  .tray .clock { width: auto; align-items: flex-end; }
</style>
